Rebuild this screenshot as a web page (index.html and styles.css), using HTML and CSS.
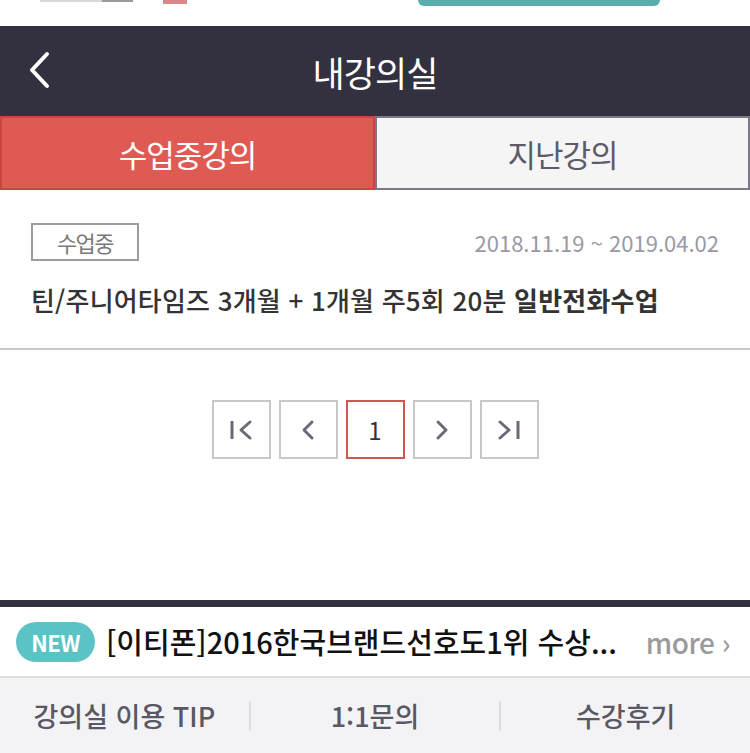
FILE: index.html
```html
<!DOCTYPE html>
<html lang="ko">
<head>
    <meta charset="UTF-8">
    <meta name="viewport" content="width=device-width, initial-scale=1.0">
    <title>내강의실</title>
    <link rel="stylesheet" href="styles.css">
</head>
<body>
<div class="page">
    <div class="top-strip">
        <div class="logo">
            <span class="logo-a"></span>
            <span class="logo-b"></span>
            <span class="logo-c"></span>
        </div>
        <div class="top-btn"></div>
    </div>

    <header class="title-bar">
        <a href="#" class="back" aria-label="뒤로">
            <svg width="24" height="40" viewBox="0 0 24 40">
                <polyline points="18,4 3,20 18,36" fill="none" stroke="#fff" stroke-width="4" stroke-linecap="round" stroke-linejoin="round"/>
            </svg>
        </a>
        <h1>내강의실</h1>
    </header>

    <nav class="tabs">
        <a href="#" class="tab active">수업중강의</a>
        <a href="#" class="tab">지난강의</a>
    </nav>

    <main class="content">
        <ul class="course-list">
            <li class="course">
                <div class="course-meta">
                    <span class="badge">수업중</span>
                    <span class="period">2018.11.19 ~ 2019.04.02</span>
                </div>
                <p class="course-name">틴/주니어타임즈 3개월 + 1개월 주5회 20분 <strong>일반전화수업</strong></p>
            </li>
        </ul>

        <div class="pagination">
            <a href="#" class="page-btn" aria-label="처음">
                <svg width="24" height="24" viewBox="0 0 24 24">
                    <line x1="3" y1="3" x2="3" y2="21" stroke="#6b6975" stroke-width="3"/>
                    <polyline points="21,4 12,12 21,20" fill="none" stroke="#6b6975" stroke-width="3" stroke-linecap="round" stroke-linejoin="round"/>
                </svg>
            </a>
            <a href="#" class="page-btn" aria-label="이전">
                <svg width="24" height="24" viewBox="0 0 24 24">
                    <polyline points="16,4 8,12 16,20" fill="none" stroke="#6b6975" stroke-width="3" stroke-linecap="round" stroke-linejoin="round"/>
                </svg>
            </a>
            <a href="#" class="page-btn current">1</a>
            <a href="#" class="page-btn" aria-label="다음">
                <svg width="24" height="24" viewBox="0 0 24 24">
                    <polyline points="8,4 16,12 8,20" fill="none" stroke="#6b6975" stroke-width="3" stroke-linecap="round" stroke-linejoin="round"/>
                </svg>
            </a>
            <a href="#" class="page-btn" aria-label="마지막">
                <svg width="24" height="24" viewBox="0 0 24 24">
                    <polyline points="3,4 12,12 3,20" fill="none" stroke="#6b6975" stroke-width="3" stroke-linecap="round" stroke-linejoin="round"/>
                    <line x1="21" y1="3" x2="21" y2="21" stroke="#6b6975" stroke-width="3"/>
                </svg>
            </a>
        </div>
    </main>

    <div class="notice">
        <span class="new">NEW</span>
        <a href="#" class="notice-text">[이티폰]2016한국브랜드선호도1위 수상...</a>
        <a href="#" class="more">more ›</a>
    </div>

    <div class="footer-links">
        <a href="#">강의실 이용 TIP</a>
        <a href="#">1:1문의</a>
        <a href="#">수강후기</a>
    </div>
</div>
</body>
</html>
```

FILE: styles.css
```css
* {
    box-sizing: border-box;
    margin: 0;
    padding: 0;
}

body {
    font-family: "Noto Sans CJK KR", "Noto Sans", sans-serif;
    background: #fff;
    color: #333;
}

a {
    text-decoration: none;
    color: inherit;
}

ul {
    list-style: none;
}

.page {
    width: 750px;
    height: 753px;
    display: flex;
    flex-direction: column;
    overflow: hidden;
}

/* top strip (cut-off site header) */
.top-strip {
    height: 26px;
    display: flex;
    align-items: flex-start;
    padding-left: 40px;
}

.logo {
    display: flex;
    align-items: flex-start;
    width: 378px;
}

.logo-a {
    width: 62px;
    height: 2px;
    background: #d8d8d8;
}

.logo-b {
    width: 31px;
    height: 2px;
    background: #9a9a9a;
}

.logo-c {
    width: 24px;
    height: 4px;
    margin-left: 30px;
    background: #d88a8a;
}

.top-btn {
    width: 242px;
    height: 6px;
    background: #5aadad;
    border-radius: 0 0 6px 6px;
}

/* title bar */
.title-bar {
    height: 90px;
    background: #33313f;
    display: flex;
    align-items: center;
    justify-content: center;
    position: relative;
}

.back {
    position: absolute;
    left: 29px;
    top: 24px;
    display: flex;
}

.title-bar h1 {
    color: #fff;
    font-size: 35px;
    font-weight: 400;
    letter-spacing: -1px;
    line-height: 1;
}

/* tabs */
.tabs {
    display: flex;
    height: 74px;
}

.tab {
    flex: 1;
    display: flex;
    align-items: center;
    justify-content: center;
    font-size: 31px;
    letter-spacing: -1px;
    line-height: 1;
    border: 2px solid #7b7987;
    background: #f5f5f6;
    color: #5d5b66;
}

.tab.active {
    flex: 0 0 375px;
    background: #e05a54;
    border-color: #c9453f;
    color: #fff;
}

/* content */
.content {
    height: 410px;
}

.course {
    padding: 33px 31px 0;
    height: 160px;
    border-bottom: 2px solid #c8c8c8;
}

.course-meta {
    display: flex;
    justify-content: space-between;
    align-items: center;
}

.badge {
    width: 108px;
    height: 38px;
    border: 2px solid #9c9c9c;
    color: #7a7a7a;
    font-size: 22px;
    letter-spacing: -1.5px;
    display: flex;
    align-items: center;
    justify-content: center;
    line-height: 1;
}

.period {
    color: #9a99a5;
    font-size: 22px;
    letter-spacing: 0;
    line-height: 1;
}

.course-name {
    margin-top: 23px;
    font-size: 26px;
    letter-spacing: 0.2px;
    line-height: 32px;
    color: #333;
    font-weight: 500;
}

.course-name strong {
    font-weight: 700;
}

.pagination {
    display: flex;
    justify-content: center;
    gap: 8px;
    margin-top: 50px;
}

.page-btn {
    width: 59px;
    height: 59px;
    border: 2px solid #c8c8c8;
    display: flex;
    align-items: center;
    justify-content: center;
    font-size: 24px;
    color: #333;
    line-height: 1;
}

.page-btn.current {
    border-color: #cf5752;
}

/* notice */
.notice {
    border-top: 7px solid #33313f;
    height: 78px;
    display: flex;
    align-items: center;
    padding: 0 20px 0 16px;
    border-bottom: 2px solid #dedede;
}

.new {
    width: 79px;
    height: 40px;
    border-radius: 20px;
    background: #5bc3c5;
    color: #fff;
    font-size: 22px;
    font-weight: 700;
    letter-spacing: -0.5px;
    display: flex;
    align-items: center;
    justify-content: center;
    line-height: 1;
    flex-shrink: 0;
}

.notice-text {
    margin-left: 11px;
    font-size: 29px;
    font-weight: 500;
    letter-spacing: 0;
    color: #111;
    white-space: nowrap;
    flex: 1;
    line-height: 1;
}

.more {
    color: #9a9a9a;
    font-size: 28px;
    font-weight: 500;
    letter-spacing: -0.5px;
    line-height: 1;
}

/* footer */
.footer-links {
    flex: 1;
    background: #f3f3f5;
    display: flex;
    align-items: center;
}

.footer-links a {
    flex: 1;
    text-align: center;
    font-size: 27px;
    font-weight: 500;
    letter-spacing: 0;
    color: #5a5866;
    line-height: 30px;
    border-left: 2px solid #dcdcdf;
}

.footer-links a:first-child {
    border-left: none;
}
```
